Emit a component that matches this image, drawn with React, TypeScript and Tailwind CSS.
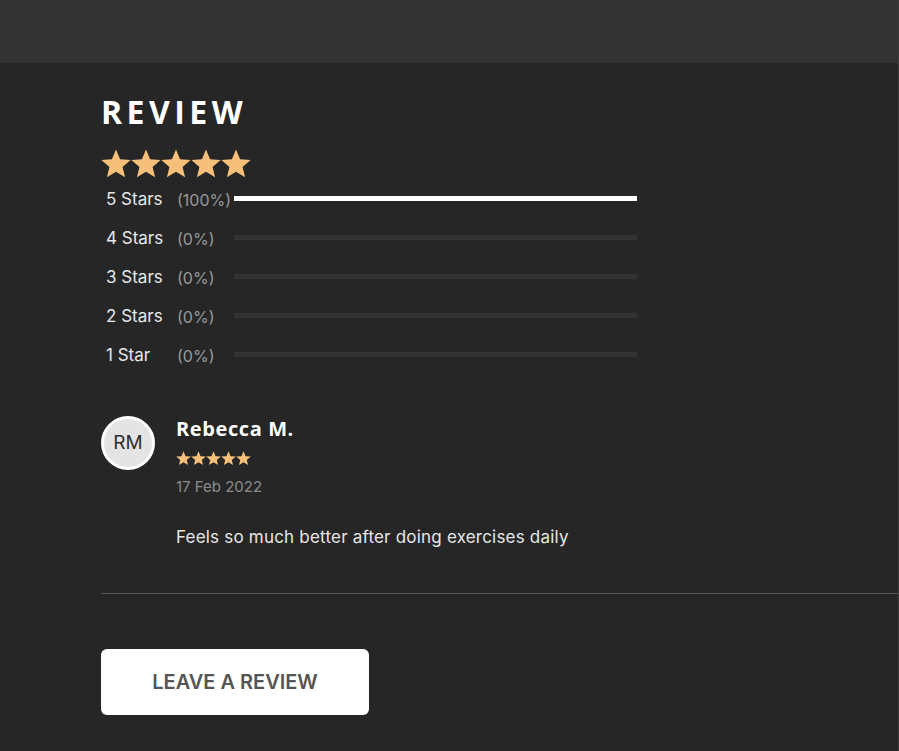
const rows = [
  { label: "5 Stars", pct: 100 },
  { label: "4 Stars", pct: 0 },
  { label: "3 Stars", pct: 0 },
  { label: "2 Stars", pct: 0 },
  { label: "1 Star", pct: 0 },
];

function Star({ size }: { size: number }) {
  return (
    <svg width={size} height={size} viewBox="0.6 0.8 22.8 22.8" aria-hidden="true">
      <path
        fill="#f7c07a"
        d="M12 1.2l3.1 7.4 8 .6-6.1 5.2 1.9 7.8L12 18l-6.9 4.2L7 14.4.9 9.2l8-.6z"
      />
    </svg>
  );
}

function Stars({ size }: { size: number }) {
  return (
    <div className="flex">
      {[0, 1, 2, 3, 4].map((i) => (
        <Star key={i} size={size} />
      ))}
    </div>
  );
}

export default function App() {
  return (
    <div
      className="min-h-[751px] w-[899px] bg-[#262626] text-[#e8e8e8] border-r border-[#3a3a3a]"
      style={{ fontFamily: "Inter, 'Open Sans', sans-serif" }}
    >
      <div className="h-[63px] bg-[#333333]" />

      <section className="pl-[101px] pt-[33px]">
        <h2
          className="text-[32px] font-bold leading-none tracking-[0.14em] text-white"
          style={{ fontFamily: "'Open Sans', sans-serif" }}
        >
          REVIEW
        </h2>

        <div className="mt-[21px]">
          <Stars size={30} />
        </div>

        <ul className="w-[536px]">
          {rows.map((r) => (
            <li key={r.label} className="flex h-[39px] items-center">
              <span className="w-[76px] pl-[5px] pt-[2px] text-[17px] text-[#e8e8e8]">{r.label}</span>
              <span className="w-[57px] pt-[2px] text-[16px] text-[#9a9a9a]">({r.pct}%)</span>
              <div className="h-[5px] w-[403px] bg-[#333333]">
                <div className="h-full bg-white" style={{ width: `${r.pct}%` }} />
              </div>
            </li>
          ))}
        </ul>

        <div className="mt-[42px] flex gap-[21px]">
          <div className="flex h-[54px] w-[54px] shrink-0 items-center justify-center rounded-full border-[3px] border-white bg-[#e4e4e4] text-[19px] text-[#2e2e2e]">
            RM
          </div>
          <div>
            <div
              className="text-[20px] font-bold leading-[26px] tracking-[0.03em] text-white"
              style={{ fontFamily: "'Open Sans', sans-serif" }}
            >
              Rebecca M.
            </div>
            <div className="mt-[9px]">
              <Stars size={15} />
            </div>
            <div className="mt-[10px] text-[15px] text-[#8c8c8c]">17 Feb 2022</div>
            <p className="mt-[26px] text-[17px] tracking-[0.012em] text-[#e6e6e6]">
              Feels so much better after doing exercises daily
            </p>
          </div>
        </div>

        <div className="mt-[43px] h-px bg-[#555555]" />

        <button className="mt-[55px] h-[66px] w-[268px] rounded-[6px] bg-white text-[20px] font-semibold text-[#555555]">
          LEAVE A REVIEW
        </button>
      </section>
    </div>
  );
}
